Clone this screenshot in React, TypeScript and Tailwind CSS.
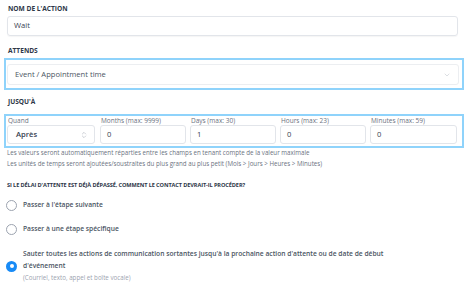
import { ChevronDown, ChevronsUpDown } from "lucide-react";

function Label({ children, className = "" }: { children: string; className?: string }) {
  return (
    <div className={`h-[7px] text-[6.6px] font-bold uppercase leading-[7px] text-[#2d3748] ${className}`}>
      {children}
    </div>
  );
}

function Field({ label, value, width }: { label: string; value: string; width: string }) {
  return (
    <div className={`flex flex-col ${width}`}>
      <span className="h-[9px] pl-[1px] text-[6.5px] leading-[9px] text-[#6b7280]">{label}</span>
      <div className="flex h-[19px] items-center rounded-[3px] border border-[#e2e5ea] bg-white px-[6px] text-[7.6px] text-[#374151]">
        {value}
      </div>
    </div>
  );
}

function Radio({ checked }: { checked?: boolean }) {
  return checked ? (
    <span className="flex h-[11px] w-[11px] shrink-0 items-center justify-center rounded-full bg-[#188bf6]">
      <span className="h-[4px] w-[4px] rounded-full bg-white" />
    </span>
  ) : (
    <span className="h-[11px] w-[11px] shrink-0 rounded-full border border-[#9ca3af] bg-white" />
  );
}

export default function App() {
  return (
    <div
      className="h-[284px] w-[465px] overflow-hidden bg-white pt-[5px]"
      style={{ fontFamily: '"Open Sans", sans-serif' }}
    >
      <Label className="pl-[8px]">Nom de l'action</Label>
      <div className="mx-[7px] mt-[4px] flex h-[20px] items-center rounded-[3px] border border-[#e2e5ea] px-[6px] text-[7.6px] text-[#374151] shadow-[0_1px_1px_rgba(0,0,0,0.04)]">
        Wait
      </div>

      <Label className="mt-[11px] pl-[8px]">Attends</Label>
      <div className="ml-[4px] mr-[1px] mt-[4px] border-2 border-[#8fd3fb] pb-[3px] pl-[1px] pr-[3px] pt-[4px]">
        <div className="flex h-[21px] items-center justify-between rounded-[3px] border border-[#eceef1] pl-[7px] pr-[7px] text-[7.6px] text-[#4b5563]">
          <span>Event / Appointment time</span>
          <ChevronDown size={8} className="text-[#b8bec7]" strokeWidth={1.5} />
        </div>
      </div>

      <Label className="mt-[8px] pl-[8px]">Jusqu'à</Label>
      <div className="ml-[4px] mr-[1px] mt-[9px] flex gap-[4px] border-2 border-[#8fd3fb] pb-[2px] pl-[1px] pr-[5px]">
        <div className="mr-[1px] flex w-[88px] flex-col">
          <span className="h-[9px] pl-[1px] text-[6.5px] leading-[9px] text-[#6b7280]">Quand</span>
          <div className="flex h-[19px] items-center justify-between rounded-[3px] border border-[#e2e5ea] bg-white pl-[8px] pr-[6px] text-[7.6px] font-semibold text-[#374151]">
            <span>Après</span>
            <ChevronsUpDown size={8} className="text-[#9ca3af]" strokeWidth={1.5} />
          </div>
        </div>
        <Field label="Months (max: 9999)" value="0" width="w-[86px]" />
        <Field label="Days (max: 30)" value="1" width="w-[86px]" />
        <Field label="Hours (max: 23)" value="0" width="w-[86px]" />
        <Field label="Minutes (max: 59)" value="0" width="w-[87px]" />
      </div>

      <div className="-mt-[1px] pl-[7px] text-[6.2px] leading-[11px] text-[#6b7280]">
        <p>Les valeurs seront automatiquement réparties entre les champs en tenant compte de la valeur maximale</p>
        <p>Les unités de temps seront ajoutées/soustraites du plus grand au plus petit (Mois &gt; Jours &gt; Heures &gt; Minutes)</p>
      </div>

      <div className="mt-[13px] h-[6px] pl-[7px] text-[5.6px] font-bold uppercase leading-[6px] tracking-[-0.1px] text-[#2d3748]">
        Si le délai d'attente est déjà dépassé, comment le contact devrait-il procéder?
      </div>

      <div className="mt-[12px] flex flex-col gap-[13px] pl-[6px] text-[6.7px] font-semibold text-[#4b5563]">
        <div className="flex h-[11px] items-center gap-[6px]">
          <Radio />
          <span>Passer à l'étape suivante</span>
        </div>
        <div className="flex h-[11px] items-center gap-[6px]">
          <Radio />
          <span>Passer à une étape spécifique</span>
        </div>
        <div className="flex items-center gap-[6px]">
          <Radio checked />
          <div className="flex flex-col">
            <span className="leading-[12px]">
              Sauter toutes les actions de communication sortantes jusqu'à la prochaine action d'attente ou de date de début
            </span>
            <span className="leading-[12px]">d'événement</span>
            <span className="text-[6.2px] font-normal leading-[12px] text-[#9ca3af]">(Courriel, texto, appel et boîte vocale)</span>
          </div>
        </div>
      </div>
    </div>
  );
}
